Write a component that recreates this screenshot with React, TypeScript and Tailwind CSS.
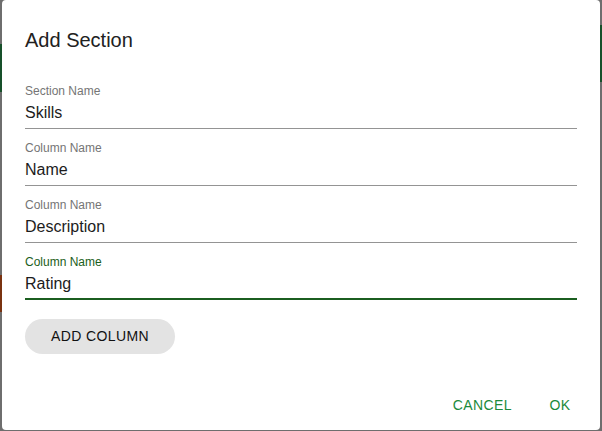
import { useState } from "react";

const fieldsInit = [
  { label: "Section Name", value: "Skills" },
  { label: "Column Name", value: "Name" },
  { label: "Column Name", value: "Description" },
  { label: "Column Name", value: "Rating" },
];

export default function App() {
  const [fields, setFields] = useState(fieldsInit);
  const focused = fields.length - 1;

  const update = (i: number, v: string) =>
    setFields((f) => f.map((x, j) => (j === i ? { ...x, value: v } : x)));

  return (
    <div
      className="relative h-[431px] w-[602px] overflow-hidden bg-[#6e6e6e]"
      style={{ fontFamily: '"Liberation Sans", Arial, sans-serif' }}
    >
      {/* bits of the page behind the backdrop */}
      <div className="absolute left-0 top-[44px] h-[48px] w-[2px] bg-[#17502a]" />
      <div className="absolute left-0 top-[275px] h-[37px] w-[2px] bg-[#7a3210]" />
      <div className="absolute right-0 top-[25px] h-[57px] w-[2px] bg-[#17502a]" />

      {/* Dialog */}
      <div className="relative ml-[2px] w-[598px] rounded-[4px] bg-white">
        <div className="px-[23px] pt-[28px]">
          <h2 className="text-[20px] leading-[24px] text-[#212121]">Add Section</h2>

          <div className="mt-[32px] flex flex-col gap-[12px]">
            {fields.map((f, i) => {
              const active = i === focused;
              return (
                <div
                  key={i}
                  className={
                    active
                      ? "border-b-2 border-[#1b5e20] pb-[5px]"
                      : "border-b border-[#949494] pb-[6px]"
                  }
                >
                  <div
                    className={`text-[12px] leading-[14px] ${
                      active ? "text-[#1b5e20]" : "text-[#757575]"
                    }`}
                  >
                    {f.label}
                  </div>
                  <input
                    value={f.value}
                    onChange={(e) => update(i, e.target.value)}
                    className="mt-[5px] block h-[19px] w-full bg-transparent p-0 text-[16px] leading-[19px] text-[#1c1c1c] outline-none"
                  />
                </div>
              );
            })}
          </div>

          <button
            onClick={() => setFields((f) => [...f, { label: "Column Name", value: "" }])}
            className="mt-[19px] h-[35px] w-[150px] rounded-full bg-[#e3e3e3] text-[14px] tracking-[0.4px] text-[#111]"
          >
            ADD COLUMN
          </button>
        </div>

        {/* Actions */}
        <div className="mt-[33px] flex justify-end gap-[8px] pb-[7px] pr-[8px]">
          <button className="h-[36px] min-w-[64px] px-[8px] text-[14px] tracking-[0.4px] text-[#1b8a3b]">
            CANCEL
          </button>
          <button className="h-[36px] min-w-[64px] px-[8px] text-[14px] tracking-[0.4px] text-[#1b8a3b]">
            OK
          </button>
        </div>
      </div>
    </div>
  );
}
